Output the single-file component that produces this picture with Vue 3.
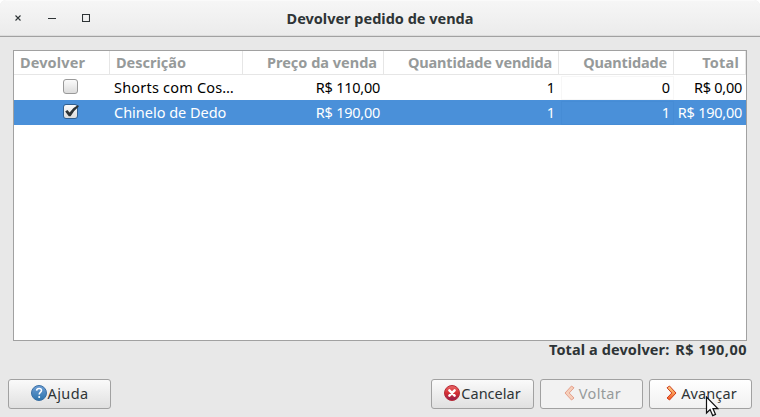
<script setup>
import { ref, computed } from 'vue'

const columns = [
  { key: 'devolver', label: 'Devolver' },
  { key: 'descricao', label: 'Descrição' },
  { key: 'preco', label: 'Preço da venda' },
  { key: 'vendida', label: 'Quantidade vendida' },
  { key: 'quantidade', label: 'Quantidade' },
  { key: 'total', label: 'Total' }
]

const items = ref([
  { devolver: false, descricao: 'Shorts com Cos…', preco: 110, vendida: 1, quantidade: 0 },
  { devolver: true, descricao: 'Chinelo de Dedo', preco: 190, vendida: 1, quantidade: 1 }
])
const selected = ref(1)

const money = value => 'R$ ' + value.toFixed(2).replace('.', ',')

const total = computed(() => {
  return items.value.reduce((sum, i) => sum + i.preco * i.quantidade, 0)
})

const toggle = item => {
  item.devolver = !item.devolver
  item.quantidade = item.devolver ? item.vendida : 0
}

const cell = (item, key) => {
  if (key === 'preco') return money(item.preco)
  if (key === 'total') return money(item.preco * item.quantidade)
  return item[key]
}
</script>

<template>
  <div class="window">
    <header class="titlebar">
      <div class="controls">
        <svg width="8" height="8" viewBox="0 0 8 8"><path d="M1.5 1.5l5 5M6.5 1.5l-5 5" /></svg>
        <svg width="8" height="8" viewBox="0 0 8 8"><path d="M0 4.5h8" /></svg>
        <svg width="8" height="8" viewBox="0 0 8 8"><path d="M.5 .5h7v7h-7z" /></svg>
      </div>
      <h1>Devolver pedido de venda</h1>
    </header>

    <main>
      <div class="table">
        <div class="row head">
          <div v-for="col in columns" :key="col.key" :class="['cell', col.key]">
            <span>{{ col.label }}</span>
          </div>
        </div>
        <div
          v-for="(item, index) in items"
          :key="index"
          :class="['row', 'item', { selected: selected === index }]"
          @click="selected = index"
        >
          <div v-for="col in columns" :key="col.key" :class="['cell', col.key]">
            <span v-if="col.key === 'devolver'" :class="['check', { on: item.devolver }]" @click="toggle(item)">
              <svg v-if="item.devolver" width="18" height="16" viewBox="0 0 18 16">
                <path d="M3.2 7.6L5.4 6L7.6 8.4Q10.8 3.6 16 1L16.8 2.4Q11.8 6.4 8.6 12.2H6.8Z" />
              </svg>
            </span>
            <span v-else>{{ cell(item, col.key) }}</span>
          </div>
        </div>
      </div>
      <p class="sum">
        <span class="sum-label">Total a devolver:</span>
        <span class="sum-value">{{ money(total) }}</span>
      </p>
    </main>

    <footer>
      <button class="ajuda">
        <svg width="18" height="18" viewBox="0 0 18 18">
          <defs>
            <linearGradient id="blue" x1="0" y1="0" x2="0" y2="1">
              <stop offset="0" stop-color="#6f9fd6" />
              <stop offset="1" stop-color="#2c73ab" />
            </linearGradient>
          </defs>
          <circle cx="9" cy="9" r="7.5" fill="url(#blue)" stroke="#3a70a5" />
          <path d="M6.6 6.6C6.8 3.8 11.5 3.8 11.5 6.6C11.5 8.4 9.2 8.4 9.2 10.4" fill="none" stroke="#fff" stroke-width="1.5" />
          <circle cx="9.2" cy="12.9" r="1" fill="#fff" />
        </svg>
        <span>Ajuda</span>
      </button>
      <button class="cancelar">
        <svg width="18" height="18" viewBox="0 0 18 18">
          <defs>
            <linearGradient id="red" x1="0" y1="0" x2="0" y2="1">
              <stop offset="0" stop-color="#e8696a" />
              <stop offset=".5" stop-color="#d62f33" />
              <stop offset="1" stop-color="#8f1c50" />
            </linearGradient>
          </defs>
          <circle cx="9" cy="9" r="7.5" fill="url(#red)" stroke="#b82a35" />
          <path d="M6.4 6.4l5.2 5.2M11.6 6.4l-5.2 5.2" stroke="#fff" stroke-width="2.5" stroke-linecap="round" />
        </svg>
        <span>Cancelar</span>
      </button>
      <button class="voltar" disabled>
        <svg width="11" height="16" viewBox="0 0 11 16">
          <path d="M7.5 1L10 2.8L5.2 8L10 13L7.5 15L1 8Z" fill="#f6cfba" stroke="#e5a08c" stroke-linejoin="round" />
        </svg>
        <span>Voltar</span>
      </button>
      <button class="avancar">
        <svg width="11" height="16" viewBox="0 0 11 16">
          <defs>
            <linearGradient id="orange" x1="0" y1="0" x2="0" y2="1">
              <stop offset="0" stop-color="#fbd08a" />
              <stop offset=".5" stop-color="#fa9b55" />
              <stop offset="1" stop-color="#f4511e" />
            </linearGradient>
          </defs>
          <path d="M3.5 1L1 2.8L5.8 8L1 13L3.5 15L10 8Z" fill="url(#orange)" stroke="#cf3d1c" stroke-linejoin="round" />
        </svg>
        <span>Avançar</span>
      </button>
    </footer>

    <svg class="pointer" width="14" height="21" viewBox="0 0 14 21">
      <path d="M1.5 1V17L5.1 13.6L7.7 19.6L10.5 18.4L8 12.6H12.8Z" fill="#fff" stroke="#111" stroke-width="1.2" />
    </svg>
  </div>
</template>

<style>
body {
  background: #fff;
}
</style>

<style scoped>
* {
  box-sizing: border-box;
  margin: 0;
}

.window {
  position: relative;
  display: flex;
  flex-direction: column;
  height: 417px;
  overflow: hidden;
  border-radius: 6px 6px 0 0;
  background: #e8e8e8;
  color: #2e3436;
  font: 15px/20px "Noto Sans", "Open Sans", sans-serif;
  white-space: nowrap;
}

.titlebar {
  display: grid;
  grid-template-columns: 100px 1fr 100px;
  align-items: center;
  height: 37px;
  border-top: 1px solid #fafafa;
  border-bottom: 1px solid #a1a1a1;
  background: linear-gradient(#f6f6f6, #ebebeb);
  box-shadow: inset 0 -1px #dcdcdc;
}
.controls {
  display: flex;
  gap: 26px;
  padding: 0 0 1px 14px;
}
.controls svg {
  fill: none;
  stroke: #2e3436;
  stroke-width: 1.1;
}
h1 {
  padding-bottom: 1px;
  text-align: center;
  font-size: 14.5px;
  font-weight: bold;
}

main {
  padding: 13px 13px 0;
}
.table {
  height: 291px;
  border: 1px solid #a1a1a1;
  background: #fff;
}
.row {
  display: grid;
  grid-template-columns: 96px 133px 141px 175px 115px 72px;
  height: 25px;
}
.cell {
  display: flex;
  align-items: center;
  justify-content: flex-end;
  padding: 0 4px 2px;
}
.head {
  height: 24px;
  border-bottom: 1px solid #e6e6e6;
  color: #969a9a;
  font-size: 14.5px;
  font-weight: bold;
}
.head .cell {
  padding: 0 6px 1px;
  border-right: 1px solid #e6e6e6;
}
.head .devolver,
.head .descricao {
  justify-content: flex-start;
}
.head .devolver {
  letter-spacing: 0.12px;
}
.head .vendida,
.head .quantidade {
  letter-spacing: -0.15px;
}
.head .total {
  letter-spacing: 0.2px;
}
.item {
  color: #000;
  font-size: 14.5px;
}
.item .devolver {
  justify-content: center;
  padding: 0 4px 4px 21px;
}
.item .descricao {
  justify-content: flex-start;
  letter-spacing: -0.02px;
}
.item:not(.selected) .descricao {
  letter-spacing: 0.2px;
}
.item .preco,
.item .total {
  letter-spacing: -0.25px;
}
.item .quantidade {
  margin: 1px 0 1px 2px;
  padding-right: 3px;
  border: 1px solid #f7f7f7;
}
.item.selected {
  background: #4a90d9;
  color: #fff;
}
.item.selected .quantidade {
  border-color: #468cd5;
}
.check {
  width: 15px;
  height: 15px;
  border: 1px solid #999;
  border-radius: 3px;
  background: linear-gradient(#fbfbfb, #dcdcdc);
}
.check.on {
  border-color: #315f8e;
}
.check svg {
  display: block;
  margin: -1px 0 0 -2px;
  fill: #2e3436;
}

.sum {
  display: flex;
  justify-content: flex-end;
  gap: 6px;
  font-size: 14.5px;
  line-height: 16px;
  font-weight: bold;
}
.sum-label {
  letter-spacing: 0.1px;
}
.sum-value {
  letter-spacing: 0.5px;
}

footer {
  display: flex;
  gap: 6px;
  margin-top: 22px;
  padding: 0 8px;
}
button {
  display: flex;
  align-items: center;
  justify-content: center;
  width: 103px;
  height: 30px;
  padding: 0 0 2px;
  border: 1px solid #a1a1a1;
  border-radius: 3px;
  background: linear-gradient(#fafafa, #e0e0e0);
  color: #2e3436;
  font: inherit;
  font-size: 14.5px;
}
button:disabled {
  background: #f2f2f2;
  color: #969a9a;
}
.ajuda {
  margin-right: auto;
  letter-spacing: 0.35px;
}
.ajuda svg,
.cancelar svg {
  margin-left: -1px;
}
.voltar span,
.avancar span {
  margin-left: 4px;
}
.voltar,
.avancar {
  padding-left: 2px;
}
.voltar {
  letter-spacing: 0.35px;
}
.avancar {
  background: linear-gradient(#fff, #f1f1f1);
  letter-spacing: 0.1px;
}

.pointer {
  position: absolute;
  left: 705px;
  top: 396px;
}
</style>
